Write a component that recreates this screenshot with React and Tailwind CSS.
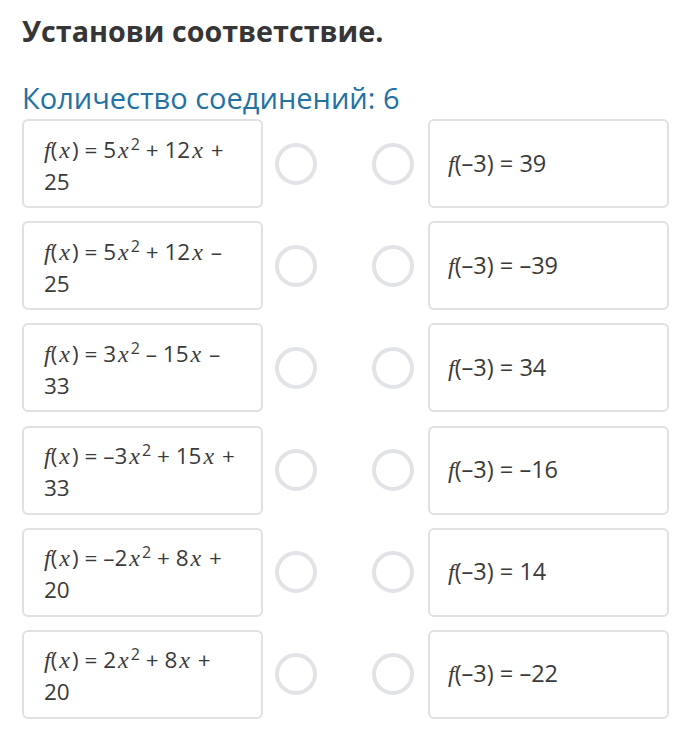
const rows = [
  { a: "5", b: "12", sign: "+", c: "25", right: "39" },
  { a: "5", b: "12", sign: "–", c: "25", right: "–39" },
  { a: "3", b: "15", sign: "–", c: "33", right: "34", mid: "–" },
  { a: "–3", b: "15", sign: "+", c: "33", right: "–16" },
  { a: "–2", b: "8", sign: "+", c: "20", right: "14" },
  { a: "2", b: "8", sign: "+", c: "20", right: "–22" },
];

const mathFont = { fontFamily: '"Liberation Serif", serif' };

function Var({ children, wide }) {
  return (
    <span
      className={wide ? "px-[2px] italic text-[24px]" : "italic text-[24px]"}
      style={mathFont}
    >
      {children}
    </span>
  );
}

function Circle() {
  return (
    <div className="h-[42px] w-[42px] shrink-0 rounded-full border-[4px] border-[#e1e3e7]" />
  );
}

export default function App() {
  return (
    <div
      className="min-h-screen bg-white px-[22px] pt-[10px] text-[#3b3b3b]"
      style={{ fontFamily: '"Open Sans", sans-serif' }}
    >
      <h1 className="text-[28.7px] font-bold leading-[42px] text-[#363636]">
        Установи соответствие.
      </h1>

      <p className="mt-[28px] text-[29px] leading-[36px] text-[#2372a3]">
        Количество соединений: 6
      </p>

      <div className="mt-[3px] flex flex-col gap-[13.2px]">
        {rows.map((row, i) => (
          <div key={i} className="flex items-center">
            <div className="flex h-[89px] w-[241px] shrink-0 items-center rounded-[6px] border-2 border-[#dfe1e4] pl-[20px] pr-2 text-[22.5px] leading-[32px]">
              <div className="mt-[4px] whitespace-nowrap">
                <Var>f</Var>(<Var wide>x</Var>) = {row.a}
                <Var wide>x</Var>
                <sup className="text-[16px]">2</sup> {row.mid || "+"} {row.b}
                <Var wide>x</Var> {row.sign}
                <br />
                {row.c}
              </div>
            </div>

            <div className="ml-[12px]">
              <Circle />
            </div>

            <div className="ml-[55px]">
              <Circle />
            </div>

            <div className="ml-[14px] flex h-[89px] w-[241px] shrink-0 items-center rounded-[6px] border-2 border-[#dfe1e4] pl-[18px] text-[23.5px]">
              <span>
                <Var>f</Var>(–3) = {row.right}
              </span>
            </div>
          </div>
        ))}
      </div>
    </div>
  );
}
